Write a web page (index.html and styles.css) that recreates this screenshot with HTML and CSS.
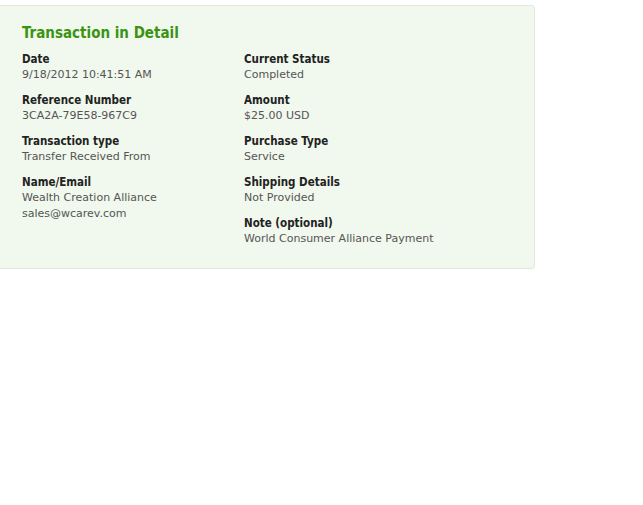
FILE: index.html
```html
<!DOCTYPE html>
<html lang="en">
<head>
    <meta charset="UTF-8">
    <title>Transaction in Detail</title>
    <link rel="stylesheet" href="styles.css">
</head>
<body>
    <div class="detail-box">
        <h2 class="detail-title">Transaction in Detail</h2>
        <div class="detail-cols">
            <div class="detail-col">
                <div class="item">
                    <div class="item-label">Date</div>
                    <div class="item-value">9/18/2012 10:41:51 AM</div>
                </div>
                <div class="item">
                    <div class="item-label">Reference Number</div>
                    <div class="item-value">3CA2A-79E58-967C9</div>
                </div>
                <div class="item">
                    <div class="item-label">Transaction type</div>
                    <div class="item-value">Transfer Received From</div>
                </div>
                <div class="item">
                    <div class="item-label">Name/Email</div>
                    <div class="item-value">Wealth Creation Alliance<br>sales@wcarev.com</div>
                </div>
            </div>
            <div class="detail-col">
                <div class="item">
                    <div class="item-label">Current Status</div>
                    <div class="item-value">Completed</div>
                </div>
                <div class="item">
                    <div class="item-label">Amount</div>
                    <div class="item-value">$25.00 USD</div>
                </div>
                <div class="item">
                    <div class="item-label">Purchase Type</div>
                    <div class="item-value">Service</div>
                </div>
                <div class="item">
                    <div class="item-label">Shipping Details</div>
                    <div class="item-value">Not Provided</div>
                </div>
                <div class="item">
                    <div class="item-label">Note (optional)</div>
                    <div class="item-value">World Consumer Alliance Payment</div>
                </div>
            </div>
        </div>
    </div>
</body>
</html>
```

FILE: styles.css
```css
* {
    margin: 0;
    padding: 0;
    box-sizing: border-box;
}

body {
    font-family: 'DejaVu Sans', Verdana, sans-serif;
    background: #fff;
    padding-top: 5px;
}

.detail-box {
    width: 535px;
    background: #f1f8ed;
    border: 1px solid #dfe8da;
    border-left: none;
    border-radius: 0 4px 4px 0;
    padding: 17px 0 21px 22px;
}

.detail-title {
    font-family: 'DejaVu Sans Condensed', 'DejaVu Sans', sans-serif;
    color: #3a9412;
    font-size: 15px;
    font-weight: bold;
    line-height: 20px;
    margin-bottom: 8px;
}

.detail-cols {
    display: flex;
}

.detail-col {
    width: 222px;
    display: flex;
    flex-direction: column;
    gap: 9px;
}

.item-label {
    font-family: 'DejaVu Sans Condensed', 'DejaVu Sans', sans-serif;
    font-size: 11.5px;
    font-weight: bold;
    color: #222;
    line-height: 16px;
}

.item-value {
    font-size: 11px;
    color: #555;
    line-height: 16px;
}
```
